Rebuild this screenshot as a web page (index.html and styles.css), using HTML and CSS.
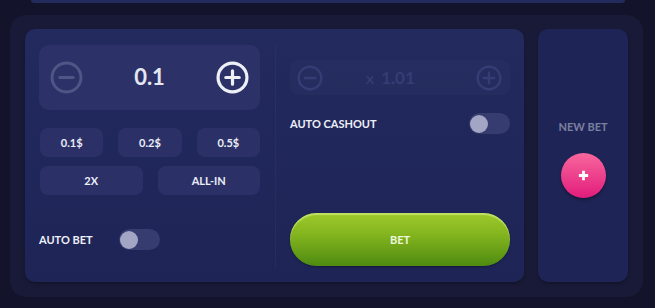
FILE: index.html
```html
<!DOCTYPE html>
<html lang="en">
<head>
  <meta charset="UTF-8" />
  <meta name="viewport" content="width=device-width, initial-scale=1.0" />
  <title>Bet Panel</title>
  <link rel="stylesheet" href="styles.css">
</head>
<body>
  <div class="top-bar"></div>

  <div class="board">
    <div class="bet-panel">
      <div class="col col-left">
        <div class="amount-box">
          <svg class="round-icon faded" viewBox="0 0 32 32"><circle cx="16" cy="16" r="14" /><path d="M9.5 16h13" /></svg>
          <span class="amount">0.1</span>
          <svg class="round-icon" viewBox="0 0 32 32"><circle cx="16" cy="16" r="14" /><path d="M9.5 16h13M16 9.5v13" /></svg>
        </div>

        <div class="chip-row three">
          <button class="chip">0.1$</button>
          <button class="chip">0.2$</button>
          <button class="chip">0.5$</button>
        </div>
        <div class="chip-row two">
          <button class="chip">2X</button>
          <button class="chip">ALL-IN</button>
        </div>

        <div class="toggle-row auto-bet">
          <span class="label">AUTO BET</span>
          <span class="toggle"><span class="knob"></span></span>
        </div>
      </div>

      <div class="col col-right">
        <div class="multiplier-box">
          <svg class="round-icon small" viewBox="0 0 32 32"><circle cx="16" cy="16" r="14" /><path d="M9.5 16h13" /></svg>
          <span class="multiplier"><span class="x">X</span> 1.01</span>
          <svg class="round-icon small" viewBox="0 0 32 32"><circle cx="16" cy="16" r="14" /><path d="M9.5 16h13M16 9.5v13" /></svg>
        </div>

        <div class="toggle-row cashout">
          <span class="label">AUTO CASHOUT</span>
          <span class="toggle"><span class="knob"></span></span>
        </div>

        <button class="bet-btn">BET</button>
      </div>
    </div>

    <div class="side-panel">
      <span class="new-bet">NEW BET</span>
      <button class="add-btn">
        <svg viewBox="0 0 14 14"><path d="M7 2v10M2 7h10" /></svg>
      </button>
    </div>
  </div>
</body>
</html>
```

FILE: styles.css
```css
body {
  margin: 0;
  background-color: #13132b;
  font-family: 'Lato', 'Open Sans', sans-serif;
  color: #eceef7;
  width: 655px;
  height: 308px;
  overflow: hidden;
}

button {
  font-family: inherit;
  border: none;
  cursor: pointer;
}

.top-bar {
  margin: 0 30px 0 31px;
  height: 3px;
  background-color: #232a5e;
  border-radius: 0 0 6px 6px;
}

.board {
  margin: 12px 12px 0 10px;
  height: 282px;
  box-sizing: border-box;
  padding: 14px 15px 15px 15px;
  background-color: #191a37;
  border-radius: 16px;
  display: flex;
  gap: 14px;
}

.bet-panel {
  width: 499px;
  box-sizing: border-box;
  padding: 16px 14px 14px 14px;
  background: linear-gradient(180deg, #222a5e 0%, #1e2456 100%);
  border-radius: 10px;
  display: flex;
  box-shadow: 0 2px 3px rgba(0, 0, 0, 0.25);
}

.col {
  display: flex;
  flex-direction: column;
}

.col-left {
  width: 221px;
  padding-right: 15px;
  border-right: 1px solid rgba(255, 255, 255, 0.035);
}

.col-right {
  width: 220px;
  padding-left: 14px;
}

.amount-box {
  height: 65px;
  background-color: #2c3268;
  border-radius: 10px;
  display: flex;
  align-items: center;
  justify-content: space-between;
  padding: 0 11px 0 11px;
}

.round-icon {
  width: 33px;
  height: 33px;
  fill: none;
  stroke: #eef0f8;
  stroke-width: 3.1;
  stroke-linecap: round;
}

.round-icon.faded {
  stroke: #4f5585;
  stroke-width: 2.8;
}

.amount {
  font-size: 22px;
  font-weight: 700;
  color: #e4e6f2;
  margin-top: -2px;
}

.chip-row {
  display: grid;
  margin-top: 18px;
  gap: 15px;
}

.chip-row.three {
  grid-template-columns: repeat(3, 1fr);
  padding-left: 1px;
}

.chip-row.two {
  grid-template-columns: repeat(2, 1fr);
  margin-top: 9px;
  padding-left: 1px;
}

.chip {
  height: 29px;
  background-color: #2b3167;
  color: #eceef7;
  border-radius: 8px;
  font-size: 11px;
  font-weight: 700;
}

.toggle-row {
  display: flex;
  align-items: center;
}

.label {
  font-size: 11px;
  font-weight: 700;
  color: #eef0f8;
}

.auto-bet {
  margin-top: 34px;
  gap: 26px;
}

.toggle {
  width: 41px;
  height: 21px;
  border-radius: 11px;
  background-color: #363b70;
  display: flex;
  align-items: center;
  padding-left: 1px;
  box-sizing: border-box;
}

.knob {
  width: 18px;
  height: 18px;
  border-radius: 50%;
  background-color: #a2a5c4;
}

.multiplier-box {
  margin-top: 15px;
  height: 35px;
  border-radius: 8px;
  background-color: rgba(255, 255, 255, 0.018);
  display: flex;
  align-items: center;
  padding: 0 8px 0 7px;
}

.multiplier-box .round-icon.small {
  width: 26px;
  height: 26px;
  stroke: #363d74;
  stroke-width: 2.8;
}

.multiplier {
  flex: 1;
  padding-left: 43px;
  font-size: 17px;
  font-weight: 700;
  color: #363d74;
}

.multiplier .x {
  font-size: 12px;
  margin-right: 3px;
}

.cashout {
  margin-top: 18px;
  justify-content: space-between;
}

.bet-btn {
  margin-top: 79px;
  height: 53px;
  border-radius: 27px;
  background: linear-gradient(180deg, #9ec92c 0%, #84b51f 40%, #4f8b10 100%);
  box-shadow: inset 0 2px 1px rgba(220, 245, 150, 0.55), 0 1px 2px rgba(0, 0, 0, 0.3);
  color: #eef7dc;
  font-size: 11px;
  font-weight: 700;
}

.side-panel {
  width: 90px;
  background-color: #1f2456;
  border-radius: 10px;
  display: flex;
  flex-direction: column;
  align-items: center;
  box-shadow: 0 2px 3px rgba(0, 0, 0, 0.25);
}

.new-bet {
  margin-top: 91px;
  font-size: 11px;
  font-weight: 700;
  color: #7a809f;
}

.add-btn {
  margin-top: 20px;
  width: 45px;
  height: 45px;
  border-radius: 50%;
  background: linear-gradient(180deg, #f8679d 0%, #e21c7c 100%);
  box-shadow: 0 2px 3px rgba(0, 0, 0, 0.35);
  display: flex;
  align-items: center;
  justify-content: center;
  padding: 0;
}

.add-btn svg {
  width: 13px;
  height: 13px;
  fill: none;
  stroke: #ffffff;
  stroke-width: 3;
}
```
